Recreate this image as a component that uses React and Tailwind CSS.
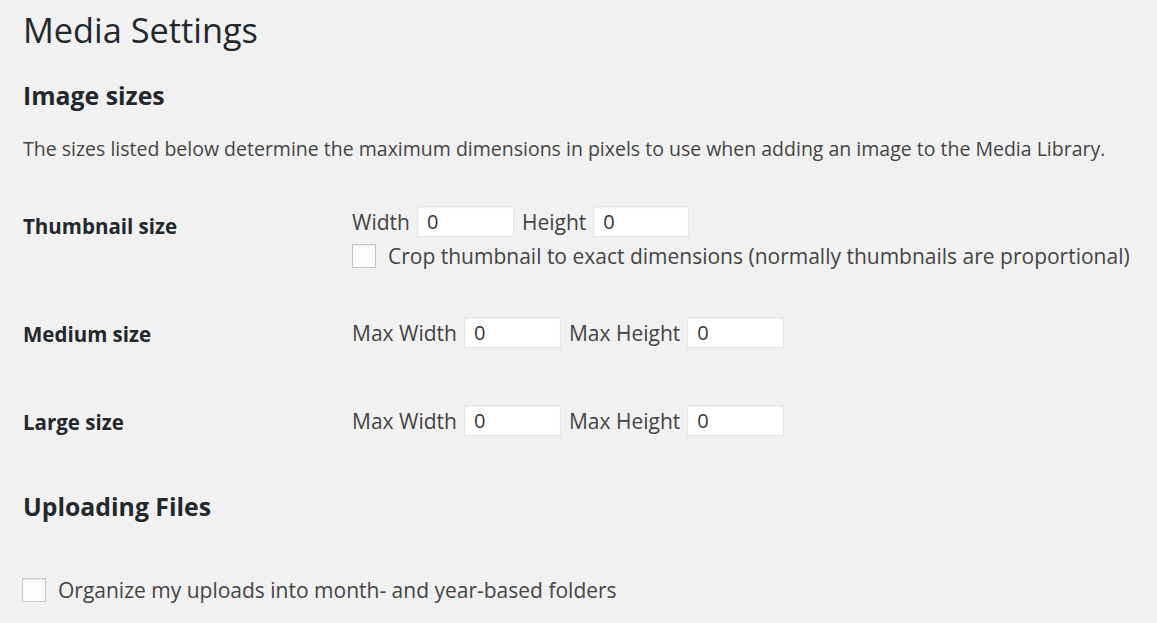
export default function App() {
  const input = 'h-[31px] bg-white border border-[#e6e6e6] shadow-[inset_0_1px_2px_rgba(0,0,0,0.07)] px-[9px] text-[20px] text-[#32373c] outline-none';
  const box = 'w-[24px] h-[24px] bg-[#fcfcfc] border border-[#c8c8c8] shadow-[inset_0_1px_2px_rgba(0,0,0,0.1)] shrink-0';
  const th = 'w-[329px] text-[20.5px] font-bold text-[#23282d] leading-[28px]';

  return (
    <div className="min-h-screen w-full bg-[#f1f1f1] text-[#444] pl-[23px] pt-[6px] overflow-hidden" style={{ fontFamily: '"Open Sans", sans-serif' }}>
      <h1 className="text-[34.3px] leading-[48px] font-normal text-[#23282d]">Media Settings</h1>

      <h2 className="mt-[25px] text-[24.8px] leading-[32px] font-bold text-[#23282d]">Image sizes</h2>
      <p className="mt-[25px] text-[19.5px] leading-[26px]">
        The sizes listed below determine the maximum dimensions in pixels to use when adding an image to the Media Library.
      </p>

      <div className="mt-[44px] flex">
        <div className={`${th} pt-[6px]`}>Thumbnail size</div>
        <div className="flex flex-col">
          <div className="flex items-center text-[21px] leading-[28px]">
            <span>Width</span>
            <input className={`${input} ml-[7px] w-[97px]`} defaultValue="0" />
            <span className="ml-[8px]">Height</span>
            <input className={`${input} ml-[7px] w-[96px]`} defaultValue="0" />
          </div>
          <label className="mt-[5px] flex items-center text-[21px] leading-[28px]">
            <span className={box}></span>
            <span className="ml-[12px]">Crop thumbnail to exact dimensions (normally thumbnails are proportional)</span>
          </label>
        </div>
      </div>

      <div className="mt-[47px] flex items-center">
        <div className={`${th} pt-[3px]`}>Medium size</div>
        <div className="flex items-center text-[21px] leading-[28px]">
          <span>Max Width</span>
          <input className={`${input} ml-[7px] w-[97px]`} defaultValue="0" />
          <span className="ml-[8px]">Max Height</span>
          <input className={`${input} ml-[7px] w-[97px]`} defaultValue="0" />
        </div>
      </div>

      <div className="mt-[57px] flex items-center">
        <div className={`${th} pt-[3px]`}>Large size</div>
        <div className="flex items-center text-[21px] leading-[28px]">
          <span>Max Width</span>
          <input className={`${input} ml-[7px] w-[97px]`} defaultValue="0" />
          <span className="ml-[8px]">Max Height</span>
          <input className={`${input} ml-[7px] w-[97px]`} defaultValue="0" />
        </div>
      </div>

      <h2 className="mt-[54px] text-[24.8px] leading-[32px] font-bold text-[#23282d]">Uploading Files</h2>

      <label className="mt-[54px] -ml-[1px] flex items-center text-[21px] leading-[28px]">
        <span className={box}></span>
        <span className="ml-[12px]">Organize my uploads into month- and year-based folders</span>
      </label>
    </div>
  );
}
